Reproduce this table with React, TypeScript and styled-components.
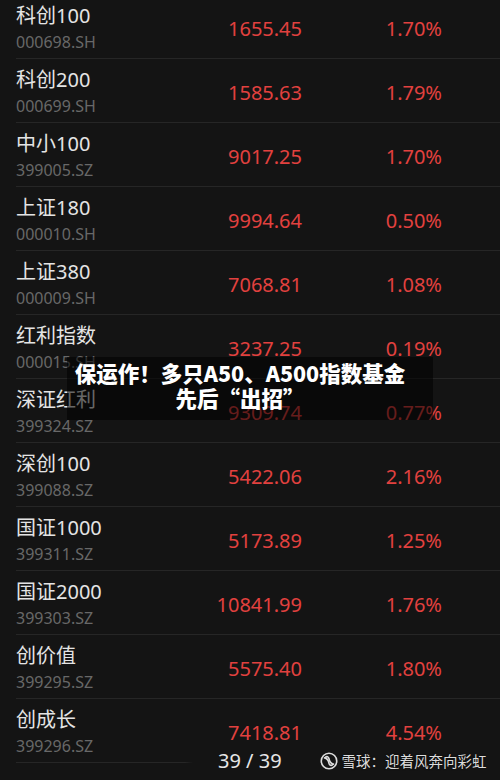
import React from "react";
import styled, { createGlobalStyle } from "styled-components";

const Global = createGlobalStyle`
  html, body { margin: 0; padding: 0; background: #141414; }
  body { width: 500px; height: 780px; overflow: hidden; font-family: "Noto Sans", "Noto Sans CJK SC", sans-serif; }
  #root { width: 500px; height: 780px; position: relative; overflow: hidden; }
`;

const Screen = styled.div`
  position: relative;
  width: 500px;
  height: 780px;
  background: #141414;
  overflow: hidden;
`;

const List = styled.div`
  display: flex;
  flex-direction: column;
  margin-top: -5px;
`;

const Row = styled.div`
  display: grid;
  grid-template-columns: 1fr 120px 140px;
  align-items: center;
  height: 64px;
  box-sizing: border-box;
  margin-left: 16px;
  padding: 8px 58px 5px 0;
  border-bottom: 1px solid #262626;
`;

const NameCol = styled.div`
  display: flex;
  flex-direction: column;
  gap: 2px;
`;

const Name = styled.div`
  font-family: "Noto Sans", "Noto Sans CJK SC", sans-serif;
  font-size: 20px;
  line-height: 26px;
  color: #e4e4e4;
  white-space: nowrap;
`;

const Code = styled.div`
  font-family: "Noto Sans", "Noto Sans CJK SC", sans-serif;
  font-size: 16px;
  line-height: 22px;
  color: #686868;
`;

const Num = styled.div`
  font-family: "Noto Sans", sans-serif;
  font-size: 20px;
  line-height: 26px;
  color: #e2413f;
  text-align: right;
  margin-top: 1px;
`;

const TitleBox = styled.div`
  position: absolute;
  left: 67px;
  top: 357px;
  width: 366px;
  height: 63px;
  box-sizing: border-box;
  padding: 3px 20px 0 0;
  background: rgba(0, 0, 0, 0.55);
  display: flex;
  flex-direction: column;
  align-items: center;
`;

const TitleLine = styled.div`
  font-family: "Noto Sans CJK SC", "Noto Sans", sans-serif;
  font-weight: 900;
  font-size: 21.5px;
  line-height: 25px;
  color: #ffffff;
  white-space: nowrap;
`;

const Footer = styled.div`
  position: absolute;
  left: 185px;
  right: 0;
  bottom: 0;
  height: 37px;
  background: linear-gradient(to right, rgba(20,20,20,0) 0px, #141414 8px);
  display: flex;
  align-items: center;
  padding-left: 33px;
  padding-bottom: 2px;
  box-sizing: border-box;
`;

const Pager = styled.div`
  font-family: "Noto Sans", sans-serif;
  font-size: 20px;
  line-height: 24px;
  color: #e6e6e6;
  white-space: nowrap;
`;

const Mark = styled.div`
  display: flex;
  align-items: center;
  gap: 4px;
  margin-left: 38px;
  color: #dcdcdc;
  font-family: "Noto Sans CJK SC", sans-serif;
  font-size: 14.5px;
  line-height: 20px;
  white-space: nowrap;
  text-shadow: 0 0 2px rgba(0,0,0,0.6);
`;

const data: [string, string, string, string][] = [
  ["科创100", "000698.SH", "1655.45", "1.70%"],
  ["科创200", "000699.SH", "1585.63", "1.79%"],
  ["中小100", "399005.SZ", "9017.25", "1.70%"],
  ["上证180", "000010.SH", "9994.64", "0.50%"],
  ["上证380", "000009.SH", "7068.81", "1.08%"],
  ["红利指数", "000015.SH", "3237.25", "0.19%"],
  ["深证红利", "399324.SZ", "9309.74", "0.77%"],
  ["深创100", "399088.SZ", "5422.06", "2.16%"],
  ["国证1000", "399311.SZ", "5173.89", "1.25%"],
  ["国证2000", "399303.SZ", "10841.99", "1.76%"],
  ["创价值", "399295.SZ", "5575.40", "1.80%"],
  ["创成长", "399296.SZ", "7418.81", "4.54%"],
  ["", "", "", ""],
];

const Logo = () => (
  <svg width="18" height="18" viewBox="0 0 20 20" fill="none" stroke="#dcdcdc" strokeWidth="1.8" strokeLinecap="round">
    <circle cx="10" cy="10" r="8.6" />
    <path d="M5 6.5 C8.5 7 9.5 10 10 12.5 C10.6 15 12.5 15.5 14 14" />
    <path d="M15 13.5 C11.5 13 10.5 10 10 7.5 C9.4 5 7.5 4.5 6 6" />
  </svg>
);

export default function App() {
  return (
    <Screen>
      <Global />
      <List>
        {data.map((d, i) => (
          <Row key={i}>
            <NameCol>
              <Name>{d[0]}</Name>
              <Code>{d[1]}</Code>
            </NameCol>
            <Num>{d[2]}</Num>
            <Num>{d[3]}</Num>
          </Row>
        ))}
      </List>
      <TitleBox>
        <TitleLine>保运作！多只A50、A500指数基金</TitleLine>
        <TitleLine>先后“出招”</TitleLine>
      </TitleBox>
      <Footer>
        <Pager>39 / 39</Pager>
        <Mark>
          <Logo />
          <span>雪球：迎着风奔向彩虹</span>
        </Mark>
      </Footer>
    </Screen>
  );
}
